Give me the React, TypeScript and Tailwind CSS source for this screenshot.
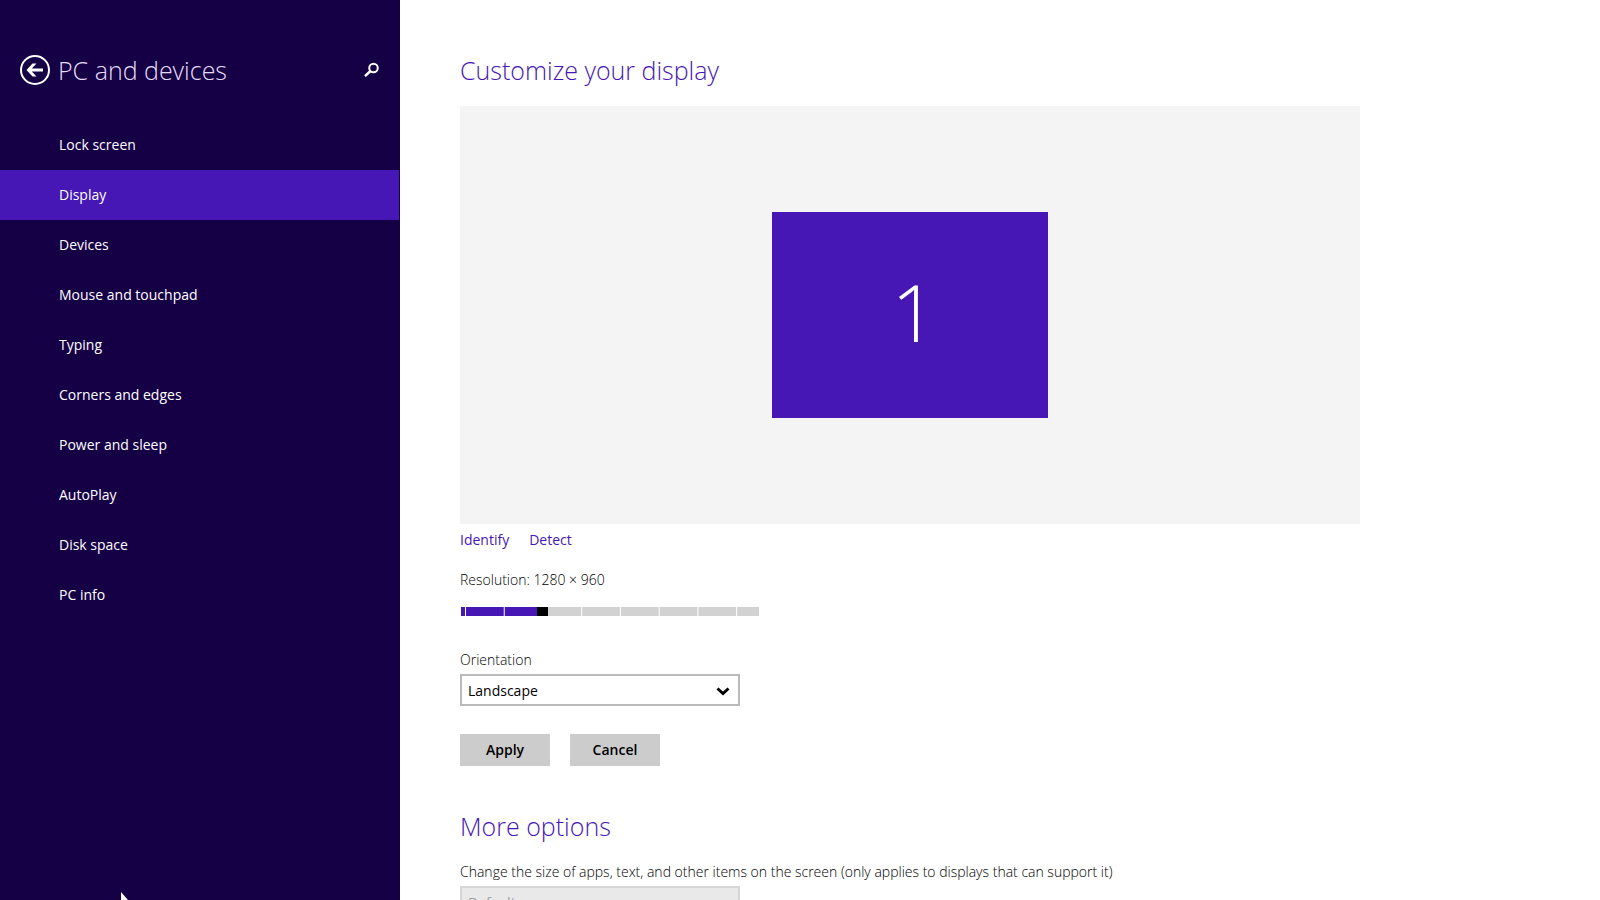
import { useState, type ReactNode } from "react";

const menuItems = [
  "Lock screen",
  "Display",
  "Devices",
  "Mouse and touchpad",
  "Typing",
  "Corners and edges",
  "Power and sleep",
  "AutoPlay",
  "Disk space",
  "PC info",
];

export default function App() {
  const [active, setActive] = useState("Display");

  return (
    <div className="flex h-screen overflow-hidden bg-white font-['Open_Sans',sans-serif] text-sm text-black">
      <Sidebar active={active} onSelect={setActive} />
      <DisplaySettings />
      <Cursor />
    </div>
  );
}

function Sidebar({
  active,
  onSelect,
}: {
  active: string;
  onSelect: (item: string) => void;
}) {
  return (
    <aside className="w-1/4 shrink-0 bg-[#160045] text-white">
      <header className="flex h-[120px] items-center px-5 pt-5">
        <button type="button" aria-label="Back">
          <BackIcon />
        </button>
        <h1 className="ml-2 grow text-[25px] leading-8 font-light text-[#e6dcfa]">
          PC and devices
        </h1>
        <button type="button" aria-label="Search">
          <SearchIcon />
        </button>
      </header>
      <nav>
        <ul>
          {menuItems.map((item) => (
            <li key={item}>
              <a
                href="#"
                onClick={() => onSelect(item)}
                className={
                  item === active
                    ? "mr-px flex h-[50px] items-center bg-[#4617b4] pl-[59px]"
                    : "mr-px flex h-[50px] items-center pl-[59px]"
                }
              >
                {item}
              </a>
            </li>
          ))}
        </ul>
      </nav>
    </aside>
  );
}

function DisplaySettings() {
  return (
    <main className="grow pt-[54px] pl-[60px]">
      <Heading>Customize your display</Heading>
      <div className="mt-5 flex h-[418px] w-full max-w-[900px] items-center justify-center bg-[#f4f4f4]">
        <div className="flex h-[206px] w-[276px] items-center justify-center bg-[#4617b4] pb-2 pl-2 text-[80px] font-light text-white">
          1
        </div>
      </div>
      <div className="mt-1 flex gap-5 text-[#4617b4]">
        <button type="button" className="h-6">
          Identify
        </button>
        <button type="button" className="h-6">
          Detect
        </button>
      </div>
      <Resolution />
      <div className="mt-8 flex w-[280px] flex-col">
        <label htmlFor="orientation" className="leading-6 font-[350]">
          Orientation
        </label>
        <div className="relative mt-[2px]">
          <select
            id="orientation"
            className="h-8 w-full appearance-none border-2 border-[#bababa] bg-white px-[6px] pt-[2px]"
          >
            <option>Landscape</option>
            <option>Portrait</option>
          </select>
          <ChevronIcon />
        </div>
      </div>
      <div className="mt-7 flex gap-5 font-semibold">
        <button type="button" className="h-8 w-[90px] bg-[#cccccc]">
          Apply
        </button>
        <button type="button" className="h-8 w-[90px] bg-[#cccccc]">
          Cancel
        </button>
      </div>
      <section className="mt-11">
        <Heading>More options</Heading>
        <label
          htmlFor="size"
          className="mt-[18px] block leading-6 font-[350]"
        >
          Change the size of apps, text, and other items on the screen (only
          applies to displays that can support it)
        </label>
        <select
          id="size"
          disabled
          className="mt-[2px] h-8 w-[280px] appearance-none border-2 border-[#d6d6d6] bg-[#e9e9e9] px-[6px] pt-[2px] text-[#a0a0a0] opacity-100"
        >
          <option>Default</option>
        </select>
      </section>
    </main>
  );
}

function Heading({ children }: { children: ReactNode }) {
  return (
    <h2 className="text-[25px] leading-8 font-light text-[#4617b4]">
      {children}
    </h2>
  );
}

function Resolution() {
  const [value, setValue] = useState(9);
  const filled = `${(value / 34) * 100}%`;

  return (
    <div className="mt-4 flex flex-col">
      <label htmlFor="resolution" className="leading-6 font-[350]">
        Resolution: 1280 × 960
      </label>
      <input
        id="resolution"
        type="range"
        min={0}
        max={34}
        value={value}
        onChange={(e) => setValue(Number(e.target.value))}
        className="mt-[15px] ml-px h-[9px] w-[298px] appearance-none [&::-webkit-slider-thumb]:h-[9px] [&::-webkit-slider-thumb]:w-[11px] [&::-webkit-slider-thumb]:appearance-none [&::-webkit-slider-thumb]:bg-black"
        style={{
          backgroundImage: `linear-gradient(to right, #fff 1px, transparent 1px), linear-gradient(to right, #4617b4 ${filled}, #d2d2d2 ${filled})`,
          backgroundSize: "13% 100%, 100% 100%",
          backgroundPosition: "4px 0, 0 0",
        }}
      />
    </div>
  );
}

function BackIcon() {
  return (
    <svg width="30" height="30" viewBox="0 0 30 30">
      <circle cx="15" cy="15" r="14" fill="none" stroke="#fff" strokeWidth="2" />
      <path
        d="M6.500 15 12.500 8.500h4L11.800 13.500H23v3H11.800l4.700 5h-4z"
        fill="#fff"
      />
    </svg>
  );
}

function SearchIcon() {
  return (
    <svg width="16" height="16" viewBox="0 0 16 16" fill="none" stroke="#fff">
      <circle cx="9.500" cy="6" r="4.250" strokeWidth="2" />
      <path d="M6.500 9 1 14.200" strokeWidth="2.500" />
    </svg>
  );
}

function ChevronIcon() {
  return (
    <svg
      className="pointer-events-none absolute top-3 right-[10px]"
      width="14"
      height="10"
      viewBox="0 0 14 10"
      fill="none"
      stroke="#000"
      strokeWidth="3"
    >
      <path d="M1.500 2.500 7 7.500 12.500 2.500" />
    </svg>
  );
}

function Cursor() {
  return (
    <svg
      className="pointer-events-none absolute bottom-0 left-[120px]"
      width="9"
      height="8"
      viewBox="0 0 9 8"
    >
      <path d="M1 0v8h7z" fill="#fff" />
    </svg>
  );
}
